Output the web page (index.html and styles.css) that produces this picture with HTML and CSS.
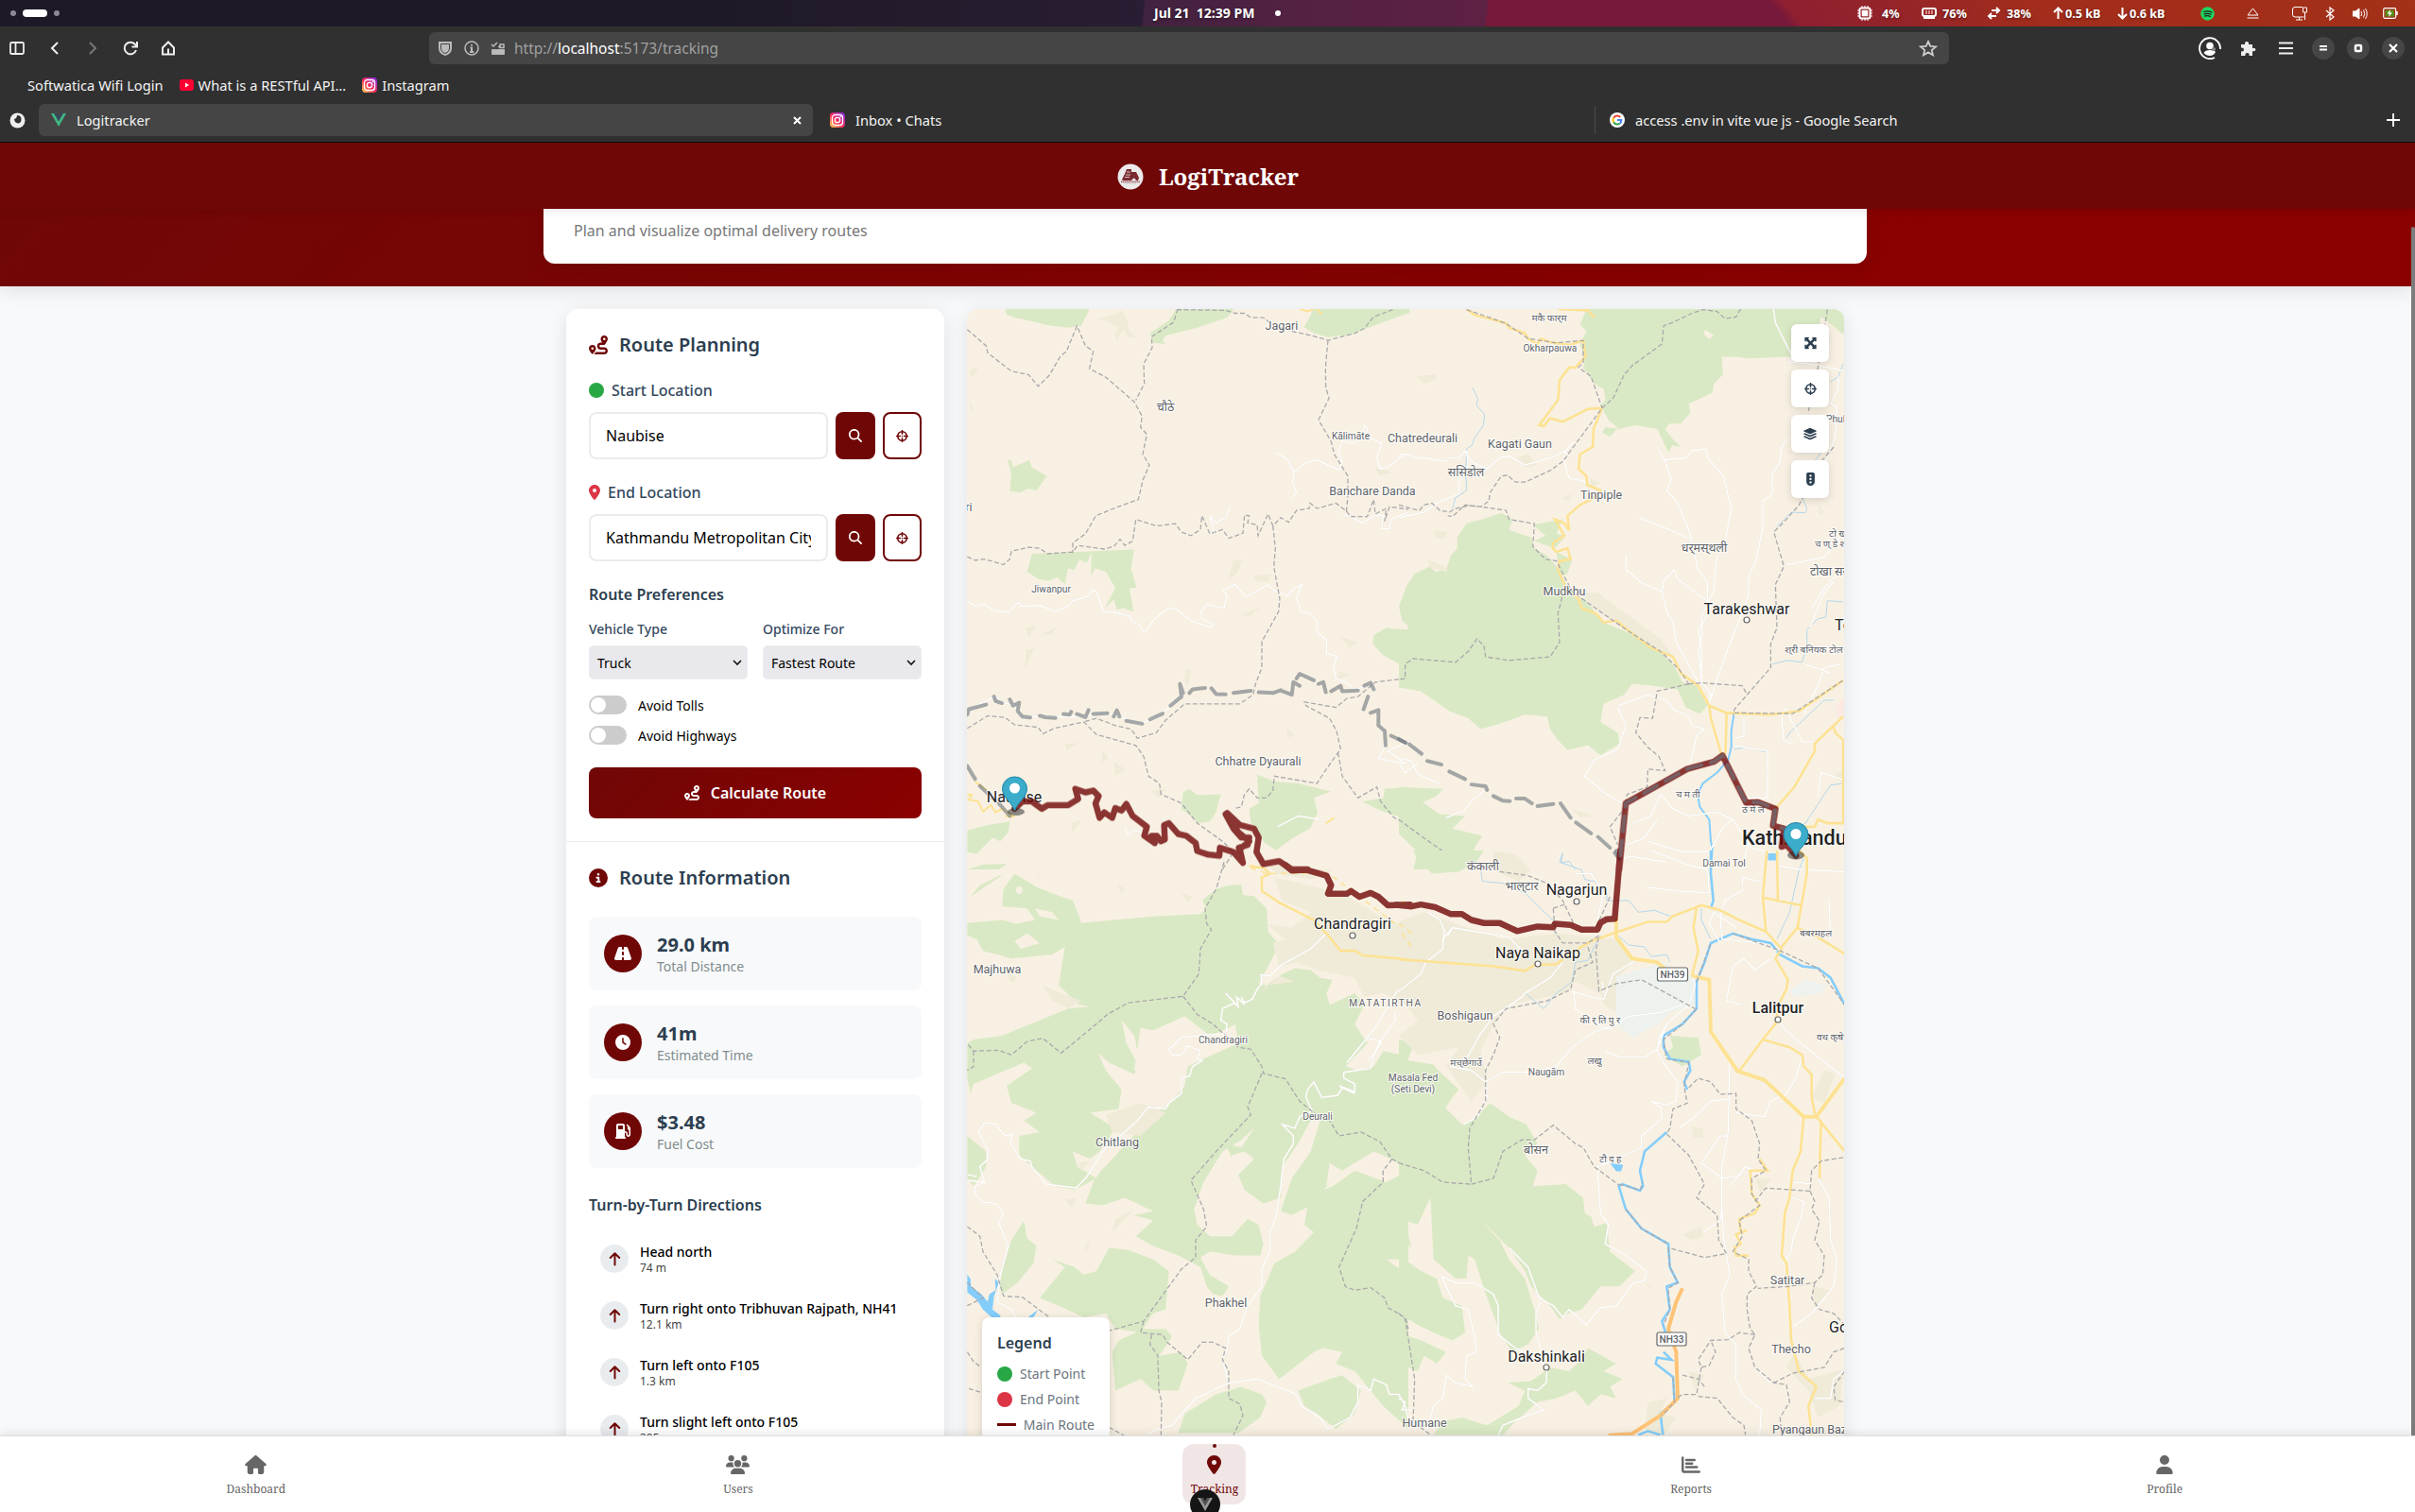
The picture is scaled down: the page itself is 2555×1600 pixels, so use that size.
FILE: index.html
```html
<!DOCTYPE html>
<html lang="en">
<head>
<meta charset="utf-8">
<title>Logitracker</title>
<link rel="stylesheet" href="styles.css">
</head>
<body>
<svg class="defs" width="0" height="0">
  <defs>
    <symbol id="route" viewBox="0 0 512 512"><path d="M512 96c0 50.2-59.1 125.1-84.6 155c-3.8 4.4-9.4 6.1-14.5 5H320c-17.7 0-32 14.3-32 32s14.3 32 32 32h96c53 0 96 43 96 96s-43 96-96 96H139.6c8.7-9.9 19.3-22.6 30-36.8c6.3-8.4 12.8-17.6 19-27.2H416c17.7 0 32-14.3 32-32s-14.3-32-32-32H320c-53 0-96-43-96-96s43-96 96-96h39.8c-21-31.5-39.8-67.7-39.8-96c0-53 43-96 96-96s96 43 96 96zM117.1 489.1c-3.8 4.3-7.2 8.1-10.1 11.3l-1.8 2-.2-.2c-6 4.6-14.6 4-20-1.8C59.8 473 0 402.5 0 352c0-53 43-96 96-96s96 43 96 96c0 30-21.1 67-43.5 97.9c-10.7 14.7-21.7 28-30.8 38.5l-.6 .7zM128 352a32 32 0 1 0 -64 0 32 32 0 1 0 64 0zM416 128a32 32 0 1 0 0-64 32 32 0 1 0 0 64z"/></symbol>
    <symbol id="pin" viewBox="0 0 384 512"><path d="M215.7 499.2C267 435 384 279.4 384 192C384 86 298 0 192 0S0 86 0 192c0 87.4 117 243 168.3 307.2c12.3 15.3 35.1 15.3 47.4 0zM192 128a64 64 0 1 1 0 128 64 64 0 1 1 0-128z"/></symbol>
    <symbol id="search" viewBox="0 0 512 512"><path d="M416 208c0 45.9-14.9 88.3-40 122.7L502.6 457.4c12.5 12.5 12.5 32.8 0 45.3s-32.8 12.5-45.3 0L330.7 376c-34.4 25.2-76.8 40-122.7 40C93.1 416 0 322.9 0 208S93.1 0 208 0S416 93.1 416 208zM208 352a144 144 0 1 0 0-288 144 144 0 1 0 0 288z"/></symbol>
    <symbol id="cross" viewBox="0 0 512 512"><g fill="none" stroke="currentColor" stroke-width="62" stroke-linecap="round"><circle cx="256" cy="256" r="186"/><path d="M256 30V170M256 342V482M30 256H170M342 256H482"/></g><circle cx="256" cy="256" r="32"/></symbol>
    <symbol id="info" viewBox="0 0 512 512"><path d="M256 512A256 256 0 1 0 256 0a256 256 0 1 0 0 512zM216 336h24V272H216c-13.3 0-24-10.7-24-24s10.7-24 24-24h48c13.3 0 24 10.7 24 24v88h8c13.3 0 24 10.7 24 24s-10.7 24-24 24H216c-13.3 0-24-10.7-24-24s10.7-24 24-24zm40-208a32 32 0 1 1 0 64 32 32 0 1 1 0-64z"/></symbol>
    <symbol id="road" viewBox="0 0 576 512"><path d="M256 32H181.2c-27.1 0-51.3 17.1-60.3 42.6L3.1 407.2C1.1 413 0 419.2 0 425.4C0 455.5 24.5 480 54.6 480H256V416c0-17.7 14.3-32 32-32s32 14.3 32 32v64H521.4c30.2 0 54.6-24.5 54.6-54.6c0-6.2-1.1-12.4-3.1-18.2L455.1 74.6C446 49.1 421.9 32 394.8 32H320V96c0 17.7-14.3 32-32 32s-32-14.3-32-32V32zm64 192v64c0 17.7-14.3 32-32 32s-32-14.3-32-32V224c0-17.7 14.3-32 32-32s32 14.3 32 32z"/></symbol>
    <symbol id="clock" viewBox="0 0 512 512"><path d="M256 0a256 256 0 1 1 0 512A256 256 0 1 1 256 0zM232 120V256c0 8 4 15.5 10.7 20l96 64c11 7.4 25.9 4.4 33.3-6.7s4.4-25.9-6.7-33.3L280 243.2V120c0-13.3-10.7-24-24-24s-24 10.7-24 24z"/></symbol>
    <symbol id="fuel" viewBox="0 0 512 512"><path d="M32 64C32 28.7 60.7 0 96 0H256c35.3 0 64 28.7 64 64V256h8c48.6 0 88 39.4 88 88v32c0 13.3 10.7 24 24 24s24-10.7 24-24V222c-27.6-7.1-48-32.2-48-62V96L384 64c-8.8-8.8-8.8-23.2 0-32s23.2-8.8 32 0l77.3 77.3c12 12 18.7 28.3 18.7 45.3V168v24 32V376c0 39.8-32.2 72-72 72s-72-32.2-72-72V344c0-22.1-17.9-40-40-40h-8V448c17.7 0 32 14.3 32 32s-14.3 32-32 32H32c-17.7 0-32-14.3-32-32s14.3-32 32-32V64zM96 80v96c0 8.8 7.2 16 16 16H240c8.8 0 16-7.2 16-16V80c0-8.8-7.2-16-16-16H112c-8.8 0-16 7.2-16 16z"/></symbol>
    <symbol id="arrow" viewBox="0 0 384 512"><path d="M192 460V70M40 222L192 70L344 222" fill="none" stroke="currentColor" stroke-width="64" stroke-linecap="round" stroke-linejoin="round"/></symbol>
    <symbol id="home" viewBox="0 0 576 512"><path d="M575.8 255.5c0 18-15 32.100-32 32.100h-32l.7 160.200c0 35.200-20 64.200-56 64.200H392c-22 0-40-18-40-40V376c0-13-11-24-24-24h-80c-13 0-24 11-24 24v96c0 22-18 40-40 40H120c-31 0-56-25-56-56V287.600H32c-18 0-32-14-32-32.100c0-9 3-17 10-24L266.400 8c7-7 15-8 22-8s15 2 21 7L564.800 231.500c8 7 12 15 11 24z"/></symbol>
    <symbol id="users" viewBox="0 0 640 512"><circle cx="144" cy="80" r="80"/><circle cx="496" cy="80" r="80"/><path d="M0 299c0-62 45-107 106-107h44c16 0 31 4 45 10c-8 50 8 86 40 118H21c-12 0-21-9-21-21zM405 320c34-32 50-70 42-118c14-7 28-10 44-10h43c59 0 106 48 106 107c0 12-9 21-21 21z"/><circle cx="320" cy="224" r="94"/><path d="M128 485c0-73 60-133 133-133h118c73 0 133 60 133 133c0 15-12 27-27 27H155c-15 0-27-12-27-27z"/></symbol>
    <symbol id="chart" viewBox="0 0 512 512"><path d="M32 64V400q0 48 48 48H480M128 128H352M128 224H288M128 320H416" fill="none" stroke="currentColor" stroke-width="62" stroke-linecap="round"/></symbol>
    <symbol id="user" viewBox="0 0 448 512"><path d="M224 256A128 128 0 1 0 224 0a128 128 0 1 0 0 256zm-45.700 48C79.800 304 0 383.800 0 482.300C0 498.700 13.300 512 29.700 512H418.300c16.400 0 29.700-13.300 29.700-29.700C448 383.800 368.200 304 269.700 304H178.300z"/></symbol>
    <symbol id="expand" viewBox="0 0 448 512"><path d="M0 32H150L168 60L132 98L224 190L316 98L280 60L298 32H448V182L420 200L382 164L290 256L382 348L420 312L448 330V480H298L280 452L316 414L224 322L132 414L168 452L150 480H0V330L28 312L66 348L158 256L66 164L28 200L0 182z"/></symbol>
    <symbol id="layers" viewBox="0 0 576 512"><path d="M264 5q24-10 48 0L560 118q28 14 0 32L312 264q-24 10-48 0L16 150q-28-18 0-32zM60 220L250 308q38 16 76 0L516 220l44 22q28 16 0 32L312 388q-24 10-48 0L16 274q-28-16 0-32zM60 346L250 434q38 16 76 0L516 346l44 20q28 16 0 32L312 508q-24 10-48 0L16 398q-28-16 0-32z"/></symbol>
    <symbol id="light" viewBox="0 0 320 512"><path fill-rule="evenodd" d="M64 0H256Q320 0 320 64V352A160 160 0 0 1 0 352V64Q0 0 64 0zM160 80a44 44 0 1 0 .1 0zM160 208a44 44 0 1 0 .1 0zM160 336a44 44 0 1 0 .1 0z"/></symbol>
    <symbol id="insta" viewBox="0 0 16 16"><rect width="16" height="16" rx="4" fill="url(#ig)"/><g fill="none" stroke="#fff" stroke-width="1.300"><rect x="2.500" y="2.500" width="11" height="11" rx="3"/><circle cx="8" cy="8" r="2.700"/></g><circle cx="11.200" cy="4.800" r=".8" fill="#fff"/></symbol>
    <symbol id="marker" viewBox="0 0 28 38"><path d="M14 37C11 28 1 23 1 13.500A13 12.500 0 0 1 27 13.500C27 23 17 28 14 37z" fill="#3bacca" stroke="#2182a3" stroke-width="1"/><ellipse cx="14" cy="13" rx="5.500" ry="5.500" fill="#fff"/></symbol>
    <linearGradient id="ig" x1="0" y1="1" x2="1" y2="0"><stop offset="0" stop-color="#fd5"/><stop offset=".45" stop-color="#ff2a5b"/><stop offset="1" stop-color="#7a2cf5"/></linearGradient>
  </defs>
</svg>

<header class="topbar">
  <div class="spaces"><i></i><b></b><i></i></div>
  <div class="date">Jul 21&nbsp; 12:39 PM<i></i></div>
  <div class="status">
    <svg width="16" height="16" viewBox="0 0 16 16"><g fill="none" stroke="#fff" stroke-width="1.500"><path d="M5 0V16M8 0V16M11 0V16M0 5H16M0 8H16M0 11H16" stroke-width="1"/><rect x="2.500" y="2.500" width="11" height="11" rx="2" fill="#972327" stroke-width="2"/><rect x="5.500" y="5.500" width="5" height="5" fill="#fff"/></g></svg>
    <span>4%</span>
    <svg width="16" height="13" viewBox="0 0 16 13"><rect x="1" y="1" width="14" height="8" rx="2" fill="none" stroke="#fff" stroke-width="2"/><path d="M5 3V7M8 3V7M11 3V7" stroke="#eaa" stroke-width="1.500"/><path d="M2 9H14V12H2z" fill="#fff"/></svg>
    <span>76%</span>
    <svg width="15" height="14" viewBox="0 0 15 14" fill="none" stroke="#fff" stroke-width="2"><path d="M5 4H13M10 1L13 4L10 7M10 10H2M5 7L2 10L5 13"/></svg>
    <span>38%</span>
    <svg width="11" height="14" viewBox="0 0 11 14" fill="none" stroke="#fff" stroke-width="2"><path d="M5.500 13V1M1 6L5.500 1.500L10 6"/></svg>
    <span>0.5 kB</span>
    <svg width="11" height="14" viewBox="0 0 11 14" fill="none" stroke="#fff" stroke-width="2"><path d="M5.500 1V13M1 8L5.500 12.500L10 8"/></svg>
    <span>0.6 kB</span>
    <svg width="15" height="15" viewBox="0 0 15 15"><circle cx="7.500" cy="7.500" r="7.200" fill="#1ed760"/><path d="M3 5.500Q8 4 12.500 6.200M3.500 8Q8 6.500 11.500 8.500M4 10.200Q8 9 10.800 10.700" fill="none" stroke="#222" stroke-width="1.300"/></svg>
    <svg width="13" height="12" viewBox="0 0 13 12" fill="none" stroke="#fff"><path d="M1 8L6.500 1L12 8zM.5 11H12.500"/></svg>
    <svg width="16" height="15" viewBox="0 0 16 15" fill="none" stroke="#fff"><path d="M11 .5H3Q.5 .5 .5 3V8.500Q.5 11 3 11H12.500M4 14H11M7.500 11V14M11.500 1H15.500V6H11.500zM13.500 6V14"/></svg>
    <svg width="10" height="15" viewBox="0 0 10 15" fill="none" stroke="#fff" stroke-width="1.200"><path d="M1 4L9 11L5 14V1L9 4L1 11"/></svg>
    <svg width="16" height="13" viewBox="0 0 16 13" fill="none" stroke="#fff"><path d="M0 4H3L7 1V12L3 9H0z" fill="#fff"/><path d="M9 4Q10.500 6.500 9 9M11.500 2.500Q14 6.500 11.500 10.500M13.500 1Q17 6.500 13.500 12"/></svg>
    <svg width="17" height="12" viewBox="0 0 17 12"><rect x=".7" y=".7" width="13" height="10.600" rx="1.500" fill="none" stroke="#fff" stroke-width="1.200"/><rect x="2.500" y="2.500" width="9.500" height="7" fill="#5a8c1a"/><path d="M8 2L4.500 6.500H7L6 10L10 5.500H7.500z" fill="#fff"/><path d="M15 4V8" stroke="#fff" stroke-width="1.600"/></svg>
  </div>
</header>

<section class="browser">
  <div class="toolbar">
    <div class="navbtns">
      <svg width="16" height="16" viewBox="0 0 16 16" fill="none" stroke="#eee" stroke-width="1.800"><rect x="1" y="2" width="14" height="12" rx="1.500"/><path d="M6.500 2V14"/></svg>
      <svg width="16" height="16" viewBox="0 0 16 16" fill="none" stroke="#eee" stroke-width="2"><path d="M11 2L5 8L11 14"/></svg>
      <svg width="16" height="16" viewBox="0 0 16 16" fill="none" stroke="#777" stroke-width="2"><path d="M5 2L11 8L5 14"/></svg>
      <svg width="16" height="16" viewBox="0 0 16 16" fill="none" stroke="#eee" stroke-width="2"><path d="M14 10A6.300 6.300 0 1 1 12.500 3.500L14.500 5.500M15 1V6.500H9.500"/></svg>
      <svg width="16" height="16" viewBox="0 0 16 16" fill="none" stroke="#eee" stroke-width="2"><path d="M2 7.500L8 1.500L14 7.500V14.500H2zM8 14V8.500" /></svg>
    </div>
    <div class="url">
      <svg width="16" height="16" viewBox="0 0 16 16"><path d="M1 1H15V8Q15 14 8 16Q1 14 1 8z" fill="#bbb"/><path d="M3.500 3.500H12.500V8Q12.500 12 8 13.500Q3.500 12 3.500 8z" stroke="#444" fill="#bbb"/></svg>
      <svg width="16" height="16" viewBox="0 0 16 16" fill="none" stroke="#bbb" stroke-width="1.500"><circle cx="8" cy="8" r="7"/><path d="M6.500 7.500H8V12M6 12H10.200M8 4V5.500" stroke-width="2"/></svg>
      <svg width="16" height="14" viewBox="0 0 16 14" fill="none" stroke="#bbb" stroke-width="1.500"><path d="M1 3L3 5L7 1M8 5.500H11M10 3H14V6.500H10zM2 9H14V13H2z"/><path d="M2 9H14V13H2z" fill="#bbb"/></svg>
      <span class="addr">http://<b>localhost</b>:5173/tracking</span>
      <svg class="star" width="20" height="18" viewBox="0 0 20 18" fill="none" stroke="#ccc" stroke-width="1.800"><path d="M10 2L12.300 7L18 7.400L13.700 11L15 16.300L10 13.400L5 16.300L6.300 11L2 7.400L7.700 7z"/></svg>
    </div>
    <div class="winbtns">
      <svg width="24" height="24" viewBox="0 0 24 24"><path d="M23 13A11 11 0 1 0 17 22" fill="none" stroke="#fff" stroke-width="1.800"/><circle cx="12" cy="9.500" r="3.800" fill="#fff"/><path d="M5.500 17Q7 14 12 14Q17 14 18 16Q16 20 12 20Q8 20 5.500 17z" fill="#fff"/><circle cx="16" cy="13" r="2" fill="#888"/></svg>
      <svg width="17" height="17" viewBox="0 0 17 17"><path d="M5 4Q4.500 1 7 1Q9.500 1 9 4H13V8Q16 7 16.500 9.500Q16 12 13 11V16H9.500Q10 13 7.500 13Q5 13 5.500 16H1V11.500Q4 12 4 9.500Q4 7 1 7.500V4z" fill="#eee"/></svg>
      <svg width="15" height="14" viewBox="0 0 15 14"><path d="M0 1.500H15M0 7H15M0 12.500H15" stroke="#eee" stroke-width="2"/></svg>
      <i class="win"><svg width="8" height="6"><path d="M0 1H8M0 4.500H8" stroke="#fff" stroke-width="1.800"/></svg></i>
      <i class="win"><svg width="10" height="10"><rect x="2" y="2" width="6" height="6" rx="1" fill="none" stroke="#fff" stroke-width="2.500"/></svg></i>
      <i class="win"><svg width="10" height="10"><path d="M1 1L9 9M9 1L1 9" stroke="#fff" stroke-width="2.200"/></svg></i>
    </div>
  </div>
  <div class="bookmarks">
    <span class="bm">Softwatica Wifi Login</span>
    <span class="bm"><svg width="15" height="12" viewBox="0 0 15 12"><rect width="15" height="12" rx="3" fill="#f03"/><path d="M6 3.500L10 6L6 8.500z" fill="#fff"/></svg>What is a RESTful API…</span>
    <span class="bm"><svg width="16" height="16"><use href="#insta"/></svg>Instagram</span>
  </div>
  <div class="tabs">
    <svg class="ff" width="17" height="17" viewBox="0 0 17 17"><circle cx="8.500" cy="8.500" r="8" fill="#eee"/><path d="M8 3Q13 3 12.500 8Q12 11.500 9 11.500Q5.500 11 5 7Q8 6 8 3z" fill="#303030"/></svg>
    <div class="tab active"><svg width="16" height="14" viewBox="0 0 16 14"><path d="M0 0H3.200L8 8.300L12.800 0H16L8 14z" fill="#41b883"/><path d="M3.200 0H6L8 3.500L10 0H12.800L8 8.300z" fill="#35495e"/></svg><span>Logitracker</span><svg class="close" width="9" height="9"><path d="M1 1L8 8M8 1L1 8" stroke="#fff" stroke-width="2"/></svg></div>
    <div class="tab"><svg width="16" height="16"><use href="#insta"/></svg><span>Inbox • Chats</span></div>
    <div class="tab ruled"><svg width="16" height="16" viewBox="0 0 16 16"><circle cx="8" cy="8" r="8" fill="#fff"/><g fill="none" stroke-width="2"><path d="M11.200 5A4.500 4.500 0 0 0 4.200 5.600" stroke="#ea4335"/><path d="M4.200 5.600A4.500 4.500 0 0 0 4.200 10.400" stroke="#fbbc05"/><path d="M4.200 10.400A4.500 4.500 0 0 0 10.800 11.500" stroke="#34a853"/><path d="M8 8H12.300Q12.300 10.400 10.800 11.500" stroke="#4285f4"/></g></svg><span>access .env in vite vue js - Google Search</span></div>
    <svg class="plus" width="16" height="16"><path d="M8 1V15M1 8H15" stroke="#fff" stroke-width="1.800"/></svg>
  </div>
</section>

<div class="app">
  <div class="brand">
    <svg width="28" height="28" viewBox="0 0 28 28"><circle cx="14" cy="14" r="13.500" fill="#eceaea"/><path d="M5 17L8 11L10 6H15V9L20 9L23 15L22 18H20Q18 13 15 18H6z" fill="#7a2a30"/><path d="M10 9H14M9 12H14M8 14.500H13" stroke="#eceaea" stroke-width=".8"/><path d="M4 19.300H24" stroke="#a5686c" stroke-width="1.800" stroke-dasharray="1.400 .5"/><path d="M8 21.500H20" stroke="#ccc" stroke-width=".7"/></svg>
    <h1>LogiTracker</h1>
  </div>
  <div class="hero"><div class="hero-card">Plan and visualize optimal delivery routes</div></div>
  <main class="layout">
    <aside class="panel">
      <section class="planning">
        <h2><svg width="20" height="20"><use href="#route"/></svg>Route Planning</h2>
        <label class="loc"><i class="dot green"></i>Start Location</label>
        <div class="inputrow">
          <div class="input"><span>Naubise</span></div>
          <button class="btn solid"><svg width="14" height="14"><use href="#search"/></svg></button>
          <button class="btn outline"><svg width="13" height="13"><use href="#cross"/></svg></button>
        </div>
        <label class="loc"><svg class="red" width="12" height="16"><use href="#pin"/></svg>End Location</label>
        <div class="inputrow">
          <div class="input"><span>Kathmandu Metropolitan City</span></div>
          <button class="btn solid"><svg width="14" height="14"><use href="#search"/></svg></button>
          <button class="btn outline"><svg width="13" height="13"><use href="#cross"/></svg></button>
        </div>
        <h3>Route Preferences</h3>
        <div class="prefs">
          <div><label>Vehicle Type</label><div class="select">Truck<svg width="10" height="7"><path d="M1 1L5 5L9 1" fill="none" stroke="#111" stroke-width="1.600"/></svg></div></div>
          <div><label>Optimize For</label><div class="select">Fastest Route<svg width="10" height="7"><path d="M1 1L5 5L9 1" fill="none" stroke="#111" stroke-width="1.600"/></svg></div></div>
        </div>
        <div class="toggle"><i></i>Avoid Tolls</div>
        <div class="toggle"><i></i>Avoid Highways</div>
        <button class="calc"><svg width="16" height="16"><use href="#route"/></svg>Calculate Route</button>
      </section>
      <section class="information">
        <h2><svg width="20" height="20"><use href="#info"/></svg>Route Information</h2>
        <div class="stat"><i><svg width="18" height="16"><use href="#road"/></svg></i><div><b>29.0 km</b><span>Total Distance</span></div></div>
        <div class="stat"><i><svg width="16" height="16"><use href="#clock"/></svg></i><div><b>41m</b><span>Estimated Time</span></div></div>
        <div class="stat"><i><svg width="16" height="16"><use href="#fuel"/></svg></i><div><b>$3.48</b><span>Fuel Cost</span></div></div>
        <h3>Turn-by-Turn Directions</h3>
        <div class="step"><i><svg width="13" height="16"><use href="#arrow"/></svg></i><div><b>Head north</b><span>74 m</span></div></div>
        <div class="step"><i><svg width="13" height="16"><use href="#arrow"/></svg></i><div><b>Turn right onto Tribhuvan Rajpath, NH41</b><span>12.1 km</span></div></div>
        <div class="step"><i><svg width="13" height="16"><use href="#arrow"/></svg></i><div><b>Turn left onto F105</b><span>1.3 km</span></div></div>
        <div class="step"><i><svg width="13" height="16"><use href="#arrow"/></svg></i><div><b>Turn slight left onto F105</b><span>305 m</span></div></div>
      </section>
    </aside>

    <div class="map">
      <svg class="canvas" width="928" height="1240" viewBox="0 0 928 1240">
        <!-- north-west sheet -->
        <g transform="translate(-3 -7) scale(.33333 .38270)">
          <g class="forest">
            <path d="M130 15H400L372 64L330 70L270 64L205 50L160 42L135 34zM650 50L675 15H860L835 42L740 70L640 92L630 105L640 115L600 112L590 85zM1110 15H1415V28L1330 55L1290 68L1230 88L1155 97L1110 85L1078 68L1100 35zM137 433L150 438L155 455L185 445L207 435L214 455L262 480L230 520L205 515L180 525L145 522L150 470zM215 695L540 683L530 735L548 790L525 790L538 855L505 845L485 850L475 822L445 848L480 790L450 745L415 735L403 757L404 690L390 720L365 712L350 740L330 735L320 780L295 760L270 770L235 765L200 745zM1410 775L1380 840L1390 880L1410 895zM1410 905L1340 900L1300 920L1297 945L1330 975L1390 1005L1385 1060L1410 1062zM930 1305L985 1325L1060 1330L1165 1352L1110 1370L1122 1410L1098 1455L1045 1480L990 1515L955 1495L910 1440L905 1400L935 1385zM1410 1340L1335 1345L1330 1370L1265 1380L1320 1405L1410 1430zM695 1355L715 1345L740 1362L815 1360L800 1410L780 1435L745 1440L690 1400zM10 1460L75 1445L145 1435L140 1465L115 1490L90 1480L40 1525L10 1520zM10 1568L60 1555L138 1552L110 1568z"/>
          </g>
          <g class="patch"><path d="M500 22L515 40L525 80L550 100L520 95L505 75L485 105L475 90L490 70L450 50L420 45L470 35zM20 185L45 178L35 200L17 205zM15 270L35 305L22 300zM855 710L885 715L865 750L840 765zM920 755L975 752L965 775L920 768zM940 840L880 865L910 868zM195 900L230 895L205 925zM300 895L275 920L245 918zM195 960L225 958L205 990L193 1015zM705 1012L722 1020L710 1062L698 1045zM1195 925L1250 940L1225 955zM1025 1180L1050 1195L1025 1205zM320 1220L360 1218L325 1240zM440 1240L460 1260L435 1275zM475 1270L510 1290L480 1310zM590 1350L640 1345L620 1370zM340 1440L375 1430L345 1465zM1300 455L1360 470L1320 480zM1190 1020L1230 1030L1180 1045z"/></g>
          <g class="road">
            <path d="M993 415L1028 437L1047 470L1043 500L1055 525L1040 540M1047 470L1080 445L1120 435L1150 448L1190 463L1200 440L1187 410L1200 385L1240 390L1265 370L1270 340L1280 350L1275 370L1325 390L1310 430L1320 460L1345 455L1370 440L1385 420L1410 420M845 565L830 595L800 610L780 590L795 640M10 825L35 840L65 835L95 852L145 857L155 840L175 830L180 840L240 838L290 855L330 840L345 825L395 812L405 795L420 800L443 855L485 858L525 868L535 885L555 890L570 912L580 908L600 880L640 850L670 845L720 880L785 900L790 890L755 875L752 855L770 835L825 845L835 810L822 795L860 780L895 815L925 800L965 780L980 795L1025 812L1040 795L1072 780L1055 815L1070 855L1100 860L1122 885L1120 910L1150 935L1150 970L1185 980L1172 1005L1180 1040L1210 1050L1240 1070L1290 1060L1305 1075M1200 585L1225 592L1265 610L1300 590L1330 590L1325 625L1350 625L1355 600L1410 580M10 1130L50 1110L100 1090L120 1105L160 1115L180 1145L310 1145L385 1145L420 1135L480 1140L560 1165L620 1140L690 1090L690 1060M1345 1215L1315 1260L1350 1268L1400 1275L1345 1240L1410 1215M510 1455L520 1472L540 1460L570 1465M995 1450L1060 1420L1130 1430"/>
          </g>
          <g class="yellow thin"><path d="M1065 18L1090 25L1115 15L1135 32M10 1360L25 1362L15 1375L45 1380L60 1408L85 1390L100 1410L120 1400L160 1422L130 1420M1148 1440L1175 1425M35 1325L75 1350"/></g>
          <g class="border">
            <path d="M10 75L70 120L75 140L150 190L205 200L235 232L270 202L305 150L325 135L358 65L385 120L410 135L398 183L450 207L540 275L565 315L560 345L580 365L567 420L588 450L568 490L553 545L480 568L418 590L385 640L345 665L345 693M678 18L665 55L595 95L597 125L570 170L572 225L545 270M675 20L830 22L860 30L890 30L910 42L950 42L985 65L1040 80L1105 92L1155 105L1240 85L1270 72L1300 40L1360 20M1155 105L1147 180L1148 235L1158 265L1125 325L1165 385L1175 420L1218 480L1218 535L1213 580M10 703L35 713L65 710L125 725L145 710L150 688L205 677L240 680L265 695L345 690L360 672L445 682L475 675L495 655L510 672L535 660L545 600L610 618L670 612L690 635L720 645L750 628L755 590L780 640L820 628L840 652L885 638L890 588L905 590L900 610L930 615L933 645L965 585L980 618L1005 595L1030 608L1055 575L1095 570L1098 555L1120 570L1180 555L1215 578L1225 592L1280 592L1300 545L1305 585L1340 570L1335 605L1350 565L1410 572M980 618L988 680L983 730L1002 820L998 855L945 938L945 1010L925 1055L917 1085L875 1110L700 1110L640 1155L610 1190L550 1205L530 1180L480 1170L420 1150L378 1160M10 1178L75 1143L130 1148L160 1168L235 1175L250 1193L285 1178L380 1160L420 1195L545 1225L570 1255L585 1310L620 1330L625 1360L690 1385L740 1440L820 1490L855 1520L820 1568M1410 1000L1400 1040L1305 1050L1250 1090L1215 1095L1180 1120L1080 1105L1085 1115L1160 1150L1182 1185L1195 1235L1150 1290L1120 1330L985 1310L980 1350L960 1370L930 1370L905 1345L890 1360L880 1395L855 1400M1187 1245L1200 1310L1250 1370L1310 1340L1322 1380L1365 1425L1410 1445"/>
          </g>
          <path class="alt" d="M10 1140L15 1125L70 1112M95 1090L100 1102L120 1108M145 1098L155 1115L175 1107L170 1130L185 1145L210 1148M240 1143L258 1147L290 1149M315 1138L335 1140L340 1132M358 1138L385 1147L395 1127M410 1138L455 1136M475 1145L485 1128L493 1145M515 1157L565 1165M590 1153L630 1137M655 1115L690 1090L685 1055L695 1080M715 1080L725 1070L765 1066M785 1067L800 1083L830 1084M855 1080L910 1074M935 1078L980 1080L1005 1072M1010 1075L1040 1085L1045 1050L1065 1060M1055 1040L1065 1027L1110 1045M1125 1055L1140 1050L1148 1078M1165 1075L1195 1060L1200 1075L1250 1073M1270 1060L1290 1052L1300 1070M1282 1090L1268 1125M1290 1135L1315 1127L1315 1170L1335 1185L1338 1225M1355 1198L1400 1217M10 1282L35 1318M50 1337L100 1378M110 1385L145 1420"/>
        </g>

        <!-- north-east sheet -->
        <g transform="translate(457 -7) scale(.33333 .38270)">
          <g class="forest">
            <path d="M597 15H1415V90L1395 80L1360 110L1310 120L1240 150L1110 155L1070 150L1025 150L1028 200L1000 225L995 250L920 280L925 305L895 335L860 335L845 350L870 378L895 400L868 395L855 415L820 350L750 340L690 352L670 372L645 360L655 345L700 350L665 325L640 285L655 270L650 240L620 225L585 180L590 165L575 115L595 80L575 60zM0 905L30 905L15 840L20 790L50 750L100 730L115 745L150 740L165 700L185 680L185 650L215 610L265 600L325 582L360 600L350 630L420 650L430 680L470 700L500 730L555 815L590 820L650 885L790 935L870 1000L900 1050L945 1060L980 1115L955 1138L910 1120L885 1070L790 1058L740 1055L715 1085L650 1110L640 1160L695 1190L700 1220L640 1252L600 1225L535 1238L500 1205L480 1180L470 1145L400 1140L320 1165L260 1180L220 1150L160 1130L70 1075L0 1065zM425 615L520 600L500 640L530 645L495 680L430 660L465 645zM500 690L550 712L535 750L510 760zM0 1340L140 1345L120 1365L75 1382L130 1415L210 1420L170 1455L265 1475L245 1500L230 1530L140 1545L105 1568H45L60 1520L0 1470z"/>
          </g>
          <g class="land"><path d="M1340 40L1385 70L1410 90V110L1350 98L1335 60zM970 75L1000 90L985 102L970 90z"/></g>
          <g class="patch"><path d="M55 205L120 198L115 215L80 225zM575 802L630 802L830 930L870 975L850 975L700 895L640 860zM110 630L155 635L140 655L115 650zM90 710L145 730L155 745L100 735zM375 430L410 420L440 450L400 455zM605 485L640 500L610 510zM1385 1300L1410 1300V1325L1385 1320zM1330 555L1350 580L1335 590zM550 1400L620 1420L575 1425zM520 540L550 530L540 550z"/></g>
          <path d="M1415 1090L1385 1120L1395 1150L1415 1140z" fill="#fbe9e2"/>
          <g class="water thin"><path d="M233 235L250 265L247 285L272 310L268 340L240 375L232 395L215 405L212 470L215 520L180 540L170 570M1410 170L1395 205L1370 220M1340 415L1310 450M1280 540L1295 570L1290 582L1245 580L1200 620M1410 828L1360 825L1355 870L1330 875L1295 905L1295 945L1280 995L1235 990L1185 1000M1380 1100L1350 1100L1240 1190L1230 1205M1410 1330L1370 1335L1290 1440L1270 1450M1065 1235L1110 1230L1165 1243M520 1525L515 1550L540 1545L560 1568"/></g>
          <path class="water" d="M1063 1140L1055 1185L1055 1230L1045 1265L1010 1300L965 1330L948 1360L955 1395L985 1430L990 1490L995 1510L990 1568"/>
          <path d="M1172 1524H1198V1543H1172z" fill="#84cdfb"/>
          <g class="road">
            <path d="M1188 15L1195 55L1220 100L1250 150L1240 165L1300 170L1390 185L1410 190M1395 205L1395 240L1370 280L1390 290L1385 370L1355 440M1235 375L1215 400L1210 440L1185 475L1185 530L1155 550L1155 620L1135 710L1110 760L1110 810L1050 945L1010 1040L985 1110M825 410L845 440L865 490L850 520L885 555L925 640L930 665L950 740L978 770L980 830L975 870L950 905L960 950L960 1050M840 435L910 430L930 410L975 405L980 430L1030 480L1055 570L1035 660L1010 700L998 800L960 870L963 920L950 960L957 1010L960 1050M762 595L850 625L925 655M722 700L722 740L770 775L835 800L840 770L875 740L885 765L930 795L985 830M835 800L850 855L870 885L880 940L950 1050M0 430L25 420L60 432L80 430L150 440L160 430L190 430L210 410L230 440L280 460L320 430L350 425L400 450L480 430L530 410L555 385M530 410L525 440L540 485L590 495L600 510M215 410L220 450L190 500L190 530L130 550L80 580L0 595M695 1115L790 1085L850 1100L870 1125L920 1145L930 1170L970 1180L945 1195L935 1240L920 1290M695 1120L720 1170L695 1235L620 1265L590 1310L650 1355L720 1390M0 1260L40 1268L60 1305L130 1330M0 1275L20 1300L60 1275M150 1425L205 1405L235 1375L270 1350M1230 725L1350 705L1410 640M1310 845L1350 790L1410 735M1320 1215L1280 1215L1225 1120M1095 1150L1095 1200L1065 1205M1060 1225L1170 1240L1170 1370L1080 1370M740 1440L800 1420L830 1360L870 1400L920 1420L1010 1410L1060 1430M725 1500L780 1480L820 1430M790 1490L900 1520L985 1520L1030 1450L1060 1430L1120 1510L1180 1520M1090 1568L1110 1490L1200 1480M1330 1370L1340 1300L1410 1320M1215 1140L1220 1210L1245 1220M1400 1000L1350 1010L1330 1060L1285 1140M1290 1000L1370 1025M1305 900L1345 810L1380 770M960 1050L990 1080L985 1115"/>
          </g>
          <g class="yellow"><path d="M215 18L240 35L290 45L340 58L350 70L400 85L410 100L440 115L450 100L480 110L540 118L585 105L592 150L560 180L540 180L510 215L505 270L445 340L460 342L480 320L520 330L600 295L645 292L618 350L615 400L575 420L570 460L595 480L598 505L640 520L610 545L575 560L535 590L540 630L525 610L495 600L525 645L490 665L488 680L500 690L535 680L545 710L510 715L505 740L530 790L570 820L580 845L625 860L650 885L690 880L740 915L800 955L870 980L895 1025L950 1060L985 1115L1040 1135L1180 1140L1270 1130L1410 1045M985 1115L990 1150L1027 1260M1040 1135L1037 1240L1027 1260M505 18L600 22L620 42M1410 1145L1320 1220L1320 1240L1255 1340L1200 1395L1190 1400M1380 1175L1385 1190L1410 1210L1410 1440L1360 1440L1330 1430L1320 1450L1240 1450"/></g>
          <g class="border">
            <path d="M1085 18L1070 40L1035 45L1010 25L965 20L930 30L870 55L840 65L835 115L740 175L715 200L680 265L645 292L520 440L480 465L400 497L370 497L345 478L325 480L290 525L285 550L260 565L210 560L170 592L155 590M215 20L340 58L410 100L500 112L585 105L585 165L570 180L610 205L645 292M1360 20L1330 180L1300 300M1380 400L1340 440L1270 560L1230 600L1190 635L1222 730L1195 780L1200 900L1180 945L1180 1010L1105 1085L1065 1125L1060 1140M0 560L40 570L65 575L80 560L105 555L130 575L160 580L180 570L220 562L260 565L340 575L350 600L430 612L425 675L465 710L500 715L550 800L680 880L730 910L830 965L890 1015L920 1055M518 815L505 860L510 940L480 980L350 990L275 980L270 950L248 930L220 965L180 995L45 985L20 1000L20 1040L0 1042M920 1055L820 1075L805 1150L765 1148L752 1190L790 1230L825 1255L845 1295L790 1290L788 1340L725 1360L715 1400L670 1450L695 1500M920 1055L960 1052L1090 1060L1105 1085M1065 1135L1250 1137L1410 1045M0 1430L70 1475L160 1530L240 1550L330 1568"/>
          </g>
          <path class="alt" d="M0 1207L22 1218M33 1222L72 1248M90 1268L135 1278M160 1297L210 1318M230 1333L275 1338L280 1348M300 1365L330 1378L352 1379M372 1372L400 1372L422 1385M440 1393L490 1387M513 1385L545 1425M562 1438L610 1468M632 1478L670 1508M685 1522L700 1540"/>
        </g>

        <!-- south-west sheet -->
        <g transform="translate(-3 573) scale(.33333 .40820)">
          <g class="forest">
            <path d="M10 188L120 180L165 190L225 180L200 150L120 145L125 100L160 60L230 95L310 120L345 130L370 180L370 188L610 170L750 165L770 150L755 130L800 100L840 90L880 88L885 115L920 118L960 150L965 210L1000 245L965 300L935 345L960 350L1010 320L1050 305L1100 310L1130 330L1170 335L1150 370L1160 400L1240 370L1270 400L1240 450L1280 500L1210 560L1250 570L1300 560L1330 520L1390 530L1410 590V830L1355 800L1300 780L1200 830L1140 880L1170 870L1240 830L1340 860L1410 830V1085L1380 1060L1340 1060L1410 1100V1500L1330 1440L1240 1350L1180 1330L1200 1300L1140 1290L1110 1300L1000 1370L945 1310L935 1230L940 1155L985 1070L1050 1040L1110 990L1080 970L1090 925L1040 945L1005 935L1040 850L1100 780L1130 700L1100 700L1060 760L1010 820L1005 900L950 915L890 880L830 760L880 770L920 720L880 750L820 780L760 860L730 930L740 970L780 1000L850 1000L900 955L935 970L950 1020L940 1050L860 1050L780 1040L750 1055L780 1100L840 1130L820 1155L790 1150L770 1130L750 1080L680 1050L600 1025L545 1000L600 960L540 945L600 935L510 900L440 920L385 915L410 860L430 835L560 720L600 680L650 660L700 610L710 560L760 540L870 500L860 450L840 460L780 480L700 430L590 470L550 520L540 480L500 440L515 500L555 560L540 580L460 550L425 525L450 570L500 620L490 670L400 680L480 720L430 780L400 800L345 780L360 820L420 850L350 880L290 870L230 830L175 790L175 740L240 730L190 700L230 680L150 655L135 610L215 565L190 550L30 605L20 630L10 590V500L30 490L120 480L330 410L400 405L365 400L300 350L320 250L280 270L150 280L60 260L40 230L10 220zM150 1010L190 960L200 1005L230 1025L220 1070L170 1120L120 1150L110 1120zM240 1160L320 1080L280 1060L350 1080L380 1100L420 1090L460 1030L520 1035L600 1060L650 1090L640 1190L600 1200L560 1250L480 1240L450 1200L380 1210L300 1180zM490 1270L570 1240L640 1240L660 1260L620 1310L690 1300L710 1330L680 1400L600 1400L560 1370L480 1400L470 1300zM10 130L50 90L125 60L110 70L20 120zM10 740L70 780L70 820L30 870L10 850zM680 1510L700 1460L800 1410L880 1390L945 1410L960 1430L940 1470L870 1510zM1060 1400L1160 1370L1200 1360L1260 1400L1240 1460L1180 1500L1120 1460L1080 1440z"/>
          </g>
          <g class="land"><path d="M30 330L120 345L180 360L245 405L180 410L150 455L110 440L70 380L25 370zM850 790L890 780L920 800L870 840L835 825zM560 460L620 470L590 510L610 580L540 570zM160 235L200 215L240 240L180 255zM225 150L280 160L300 180L240 170zM1160 810L1200 830L1150 870z"/><circle cx="175" cy="103" r="10"/></g>
          <g class="patch"><path d="M250 350L370 390L330 410L280 390zM130 310L170 330L150 345zM970 40L1170 50L1100 75L990 60zM985 70L1200 110L1320 170L1410 200V400L1330 370L1270 380L1240 330L1120 310L1060 290L1000 300L980 240L1020 230L960 190L1040 200L1100 160L1010 130zM940 370L1000 325L1050 340L960 350zM450 685L560 655L640 680L560 740L470 730zM225 65L250 75L240 75zM320 905L360 900L340 925zM380 1030L400 1010L390 1040zM480 955L540 930L470 990zM360 810L400 805L370 830zM880 1180L900 1175L890 1190zM485 85L510 100L500 110zM690 110L725 120L710 135z"/></g>
          <g class="water"><path class="solid-water" d="M10 1100L20 1110L22 1130L55 1150L75 1170L80 1150L100 1140L98 1110L110 1120L95 1155L90 1190L115 1205V1212H90L60 1190L40 1165L10 1145zM200 1212L235 1190L220 1210z"/></g>
          <g class="road"><path d="M1150 215L1100 255L1010 295L970 325L942 322L945 345L930 360L915 385L890 395L880 380L890 400L865 380L870 405L830 370L860 395L820 410L815 440L835 450L830 475L770 478L690 485L650 515L660 530L690 530L710 505L750 520L740 540L755 545L725 560L715 585L690 590L690 630L650 655L640 670L585 665L550 700L495 740L440 780L390 845L355 875L260 865L215 820L210 805L180 800L145 755L155 735L130 740L100 710L65 705L45 730L75 775L75 800L50 820L65 860L10 855M65 860L35 870L35 890L60 912L100 915L125 940L110 965L140 1025L115 1100L105 1170L150 1190L165 1212M10 840L40 845M1410 335L1370 370L1320 440L1285 480L1215 550M1365 420L1370 440L1320 495L1300 530L1280 540M1285 487L1325 495M1325 495L1300 530L1290 565L1205 575L1205 590L1240 605L1240 625L1190 610L1240 630L1200 615L1185 635L1135 640L1110 600L1090 620L1085 640L1105 675L1065 690L1050 720L1010 710L1045 740L1045 760L1015 800L1005 870L990 950L970 990L970 1040L945 1085L945 1130L900 1180L875 1240L840 1260L835 1290L820 1320L840 1380L930 1370L1055 1410L1070 1440L1130 1470L1155 1500L1225 1470L1250 1430L1250 1385L1290 1400L1300 1370L1340 1385L1350 1410L1380 1410L1400 1440L1410 1475M840 1380L735 1420L680 1470L660 1490L615 1500L580 1512"/></g>
          <g class="yellow"><path d="M905 40L950 45L970 60L945 70L945 105L1000 135L1110 180L1150 215L1195 260L1240 260L1265 272L1410 282"/></g>
          <g class="yellow dashed"><path d="M910 45L960 60L1060 58L1160 62L1240 110L1320 160L1410 215M1390 130L1410 150"/></g>
          <g class="border">
            <path d="M825 30L800 100L765 150L770 190L785 205L750 255L745 320L695 378L520 395L455 425L390 470L308 525L250 487L200 495L150 530L110 518L30 520L10 500M30 520L30 560L10 570M695 378L740 425L790 450L870 510L910 515L945 560L950 578L1020 592L1065 650L1110 680L1160 700L1190 740L1260 730L1320 755L1358 800L1410 820M945 578L900 665L910 685L800 780L720 855L760 930L770 975L735 1010L735 1055L690 1085L570 1220L460 1245M570 1220L560 1250L630 1255L645 1275L710 1320L755 1275L790 1275L830 1290L820 1320L840 1350L840 1420L875 1435L885 1465L855 1515M595 1255L590 1280L615 1310L618 1400L627 1430L625 1515M1358 800L1330 830L1330 860L1265 910L1245 980L1190 1080L1210 1130L1240 1140L1290 1133L1335 1160L1345 1185L1400 1210L1410 1240M10 975L50 1000L60 1040L105 1100L125 1155L185 1158L270 1210M10 1180L60 1160L10 1120M10 1300L30 1325L55 1340M15 1395L55 1405M460 1495L510 1518"/>
          </g>
        </g>

        <!-- south-east sheet -->
        <g transform="translate(457 573) scale(.33333 .40820)">
          <g class="forest">
            <path d="M45 0H270L245 30L190 55L105 60L60 25zM0 490L50 500L20 560H0zM0 540L110 555L125 570L190 620L170 640L150 665L185 690L200 710L240 690L290 655L350 690L405 710L440 760L400 790L440 830L425 870L530 865L585 900L590 940L610 950L620 975L660 965L670 1040L750 1090L700 1130L640 1130L580 1190L540 1200L510 1215L480 1180L420 1130L400 1090L350 1030L300 990L260 960L320 1010L350 1060L400 1110L430 1190L445 1240L410 1280L360 1300L320 1250L280 1160L240 1060L220 1050L215 1110L180 1110L110 1060L100 900L60 970L20 960L40 1030L0 1000zM0 1050L70 1090L120 1110L140 1160L200 1180L210 1250L170 1270L110 1250L60 1230L0 1200zM0 1250L70 1270L150 1300L120 1330L80 1310L60 1350L0 1330zM345 1380L420 1375L480 1340L540 1350L580 1320L600 1290L690 1330L650 1350L710 1370L670 1390L690 1420L640 1410L600 1440L560 1400L500 1420L440 1430L370 1480L330 1515L110 1515L140 1480L200 1470L280 1490L380 1440L400 1400zM860 480L950 485L960 530L900 560L840 530L870 510z"/>
          </g>
          <g class="land"><path d="M145 665L200 680L250 670L280 600L300 640L250 690L200 710z"/></g>
          <g class="patch"><path d="M0 185L80 160L180 190L330 230L500 215L690 230L740 290L700 325L690 420L650 400L640 370L560 340L520 370L350 400L300 450L260 520L280 600L230 650L150 560L190 510L60 530L0 480L60 440L0 380zM300 0L370 10L420 50L380 80L300 50zM900 995L960 975L965 1000L930 1010zM1350 570L1385 580L1350 655L1310 640zM1310 1130L1370 1140L1320 1190zM1130 850L1180 850L1150 890zM930 715L965 720L965 745L935 745zM1255 1300L1300 1370L1410 1345L1400 1440L1330 1470L1300 1400L1230 1340zM920 1350L970 1360L940 1400zM790 1430L850 1420L830 1460L880 1470L840 1515L780 1500zM770 1115L820 1140L790 1130z"/></g>
          <path d="M690 327L840 290L870 310L940 330L940 400L860 420L820 450L745 485L700 460L688 420zM1240 365L1290 335L1360 350L1335 370L1260 380z" fill="#edf2ee"/>
          <g class="water thin"><path d="M520 5L510 30L580 50L590 75L620 80L660 110L660 130L730 130L760 160L810 155L860 170M260 50L265 80L330 85L400 110L500 190M695 220L730 245L780 250L800 275L850 270L860 290M640 220L620 250L600 285L560 290L550 340L500 370L460 410L400 370M1285 20L1270 50L1240 160L1200 230M960 150L960 180L990 230"/></g>
          <g class="water"><path d="M990 0L990 60L998 130L990 150M1415 400L1370 330L1330 305L1280 300L1210 270L1180 240L1120 230L1060 215L990 240L970 290L945 340L945 410L900 450L840 480L840 510L860 540L920 548L925 570L905 600L915 620M850 730L780 780L765 830L775 870L765 882L710 865L698 870L720 930L770 980L855 1020L860 1080L885 1120L850 1130L860 1190L835 1220L850 1260M840 1300L865 1320L820 1315L815 1330L870 1365L875 1430L830 1460L838 1515M760 1515L790 1505L830 1515"/><path class="solid-water" d="M670 810L712 815L705 832H690zM1172 8H1198V24H1172z"/></g>
          <g class="road"><path d="M0 365L70 320L85 290L140 255L140 230L170 200L350 225L390 260M90 160L130 180L145 210L140 240M170 200L155 220M520 290L480 330L400 370L390 380L300 430L255 480L215 540M160 560L230 570L275 600L330 575L420 575L500 560L550 510L620 470L680 455L730 430L830 420L900 400M550 365L610 380L650 385L680 320L750 285M555 365L560 410L650 460L680 463M650 370L645 340M655 520L700 535L780 535L820 515L850 450L920 400L940 350L930 320M800 650L830 665L835 695L770 740L770 770L690 800L630 820L640 940L665 970L655 1020L720 1050L785 1090L780 1115L745 1120L690 1180L640 1185L595 1230L540 1190L520 1210L490 1180L445 1160L410 1080L350 1030M135 1105L180 1120L240 1120L300 1150L315 1180L315 1255L370 1290L400 1300M135 1105L180 1180L220 1190L240 1260L245 1300L215 1310L210 1370L235 1390L180 1380L150 1360L140 1420L110 1440L85 1515M450 1170L435 1200L435 1250L450 1290L445 1320L470 1340L468 1380L440 1400L410 1395L410 1420L460 1450L390 1470L330 1490L315 1515M0 1420L20 1430L10 1450L50 1450M205 710L250 690L280 640L275 600M800 650L850 660L880 650L885 600L840 550L820 520L825 490L850 450M890 720L940 690L990 650L1045 645M1050 550L1045 730L1025 820L1025 920L1030 1000L1050 1100L1025 1150L1035 1250L1070 1280L1070 1370L1090 1410L1150 1450L1145 1515M1045 740L1020 740L960 810L1025 850L1090 840M1050 870L1100 820L1130 830M965 990L1020 960L1025 930M1095 100L1035 130L1020 170L1025 230L1150 240L1200 260M1060 300L1040 390L1090 400M1060 300L1095 280L1130 310L1180 280M785 95L880 105L985 110L980 50L910 35L800 0M700 30L730 15L850 30M1090 90L1090 70L1150 80M560 60L610 60L650 110L630 180M1205 40L1285 50M1290 50L1410 55M1365 130L1370 230M1280 530L1260 590L1230 630L1180 650L1160 690L1070 680M1210 450L1260 490L1415 590M1330 850L1365 900L1370 1010L1390 1060L1380 1130L1310 1200L1250 1235M1255 860L1310 865M1245 900L1285 910L1280 940L1250 1010L1245 1040L1220 1070M1130 1340L1180 1380M1320 1420L1370 1420L1380 1370L1410 1350M1070 200L1000 160L985 190L1020 240"/></g>
          <g class="yellow"><path class="wide" d="M930 325L985 335L990 470L1075 572L1160 595L1285 690L1325 690L1415 590M690 175L690 225L740 280L820 290L850 310"/><path d="M0 282L300 300L400 312L430 297L500 295L530 275L610 235L690 212L790 185L850 185L870 170L960 142L1020 155L1080 180L1165 210L1215 255L1195 280L1235 335L1230 360L1205 400L1195 450L1155 490L1080 572M945 145L935 200L950 260L930 325M1155 490L1240 510L1280 530L1285 560L1310 580L1310 640L1322 690M1168 0L1155 120L1165 210M1200 0L1203 130M1155 122L1275 142M1270 0L1295 20L1295 60L1265 200L1215 250M1265 200L1320 220L1415 268M1285 690L1275 780L1250 830L1240 900L1225 940L1215 1050L1230 1070L1240 1180L1245 1270L1270 1350L1325 1390L1300 1440L1310 1515M1340 700L1335 850M1325 690L1415 780M1145 800L1170 830L1115 830L1120 890L1145 920L1130 940L1080 955L1085 990L1105 985L1070 995L1085 1020L1065 1030L1070 1050L1110 1050"/></g>
          <path d="M900 1135L880 1170L855 1240L880 1300L885 1420L830 1465L740 1512L665 1516" fill="none" stroke="#fec376" stroke-width="4"/>
          <path d="M0 190L50 220M10 215L40 250M0 280H20" class="yellowline"/>
          <g class="border">
            <path d="M320 55L410 65L470 85L520 130L555 190M490 150L525 140M490 150L495 210L520 240L600 240L635 220L625 260L635 365L690 345L770 335L940 410M670 120L625 200M600 250L615 290L560 310L545 360L470 390L340 410L300 450L320 485L300 530L275 570L275 650L225 720L220 770L230 865L300 850L330 780L390 750L430 750L490 712L560 760L585 770L620 820L700 868M0 810L80 830L140 860L230 865M945 410L900 450L840 490L850 540L920 550L905 610L915 655L870 670L860 720L850 735L920 790L970 865L945 900L1010 945L1015 1010L1040 1045L970 1055L855 1030M920 615L950 590L990 600L1020 632L1070 630L1070 670L1120 700L1145 760L1140 800L1165 830L1120 850L1120 890L1145 920L1080 960L1090 1000L1060 1040L1110 1060L1110 1090L1135 1130L1105 1150L1105 1190L1115 1240L1130 1255L1110 1290L1130 1340L1190 1380L1230 1385L1240 1430L1210 1470L1215 1515M1130 910L1165 875L1305 883L1310 830L1340 805L1415 795M1305 883L1320 910L1310 930L1335 960L1320 1010L1350 1050L1345 1100L1320 1120L1240 1130L1140 1135M1320 1120L1310 1160L1335 1190L1380 1200L1415 1230M1190 1380L1250 1355L1350 1340L1380 1300L1415 1290M1415 1350L1380 1390L1385 1425L1415 1430M1130 1255L1080 1250L1045 1268L990 1270L950 1320L960 1340L985 1335L1005 1300L990 1270M960 1340L945 1410L900 1410L880 1420M900 1360L950 1370L970 1390M950 1415L1010 1420L1060 1470L1095 1490L1100 1515M855 1030L860 1080L885 1120L855 1135L860 1190L840 1230M870 1365L875 1430L835 1465M0 1200L20 1215L50 1370L45 1480L100 1515M700 865L765 880L775 860M720 930L770 980L855 1020M945 340L990 240M1060 215L1210 260L1330 305L1415 400"/>
          </g>
          <path class="alt" d="M690 0L700 20"/>
        </g>

        <g class="places">
          <g class="mid"><text x="333" y="17.500">Jagari</text><text x="210" y="103">चौठे</text><text x="482" y="136">Chatredeurali</text><text x="429" y="192">Banchare Danda</text><text x="2" y="209">ri</text><text x="308" y="478">Chhatre Dyaurali</text><text x="585" y="142">Kagati Gaun</text><text x="528" y="172">ससिडोल</text><text x="671" y="196">Tinpiple</text><text x="780" y="252">धर्&zwnj;मस्&zwnj;थली</text><text class="from" x="892" y="277">टोखा सर</text><text x="632" y="298">Mudkhu</text><text x="546" y="589">कंकाली</text><text x="587" y="610">भाल्&zwnj;टार</text><text x="527" y="747">Boshigaun</text><text x="602" y="889">बोसन</text><text x="868" y="1027">Satitar</text><text x="872" y="1100">Thecho</text><text x="484" y="1178">Humane</text><text class="from" x="852" y="1185">Pyangaun Baz</text><text x="32" y="698">Majhuwa</text><text x="159" y="881">Chitlang</text><text x="274" y="1051">Phakhel</text></g>
          <g class="small"><text x="406" y="134">Kālimāte</text><text x="89" y="296">Jiwanpur</text><text x="616" y="9">मकै फार्&zwnj;म</text><text x="617" y="41">Okharpauwa</text><text class="from" x="909" y="116">Phul</text><text class="wide-text from" x="912" y="237">टोख</text><text class="wide-text from" x="897" y="248">चण्&zwnj;डेश</text><text x="896" y="360">श्&zwnj;री बनियक टोल</text><text class="wide-text" x="764" y="513">चमती</text><text class="wide-text" x="833" y="529">ठमेल</text><text x="801" y="586">Damai Tol</text><text class="wide-text" x="671" y="752">कीर्&zwnj;तिपुर</text><text x="528" y="797">मच्&zwnj;छेगाउँ</text><text x="664" y="795">लखु</text><text x="613" y="807">Naugām</text><text x="472" y="813">Masala Fed</text><text x="472" y="825">(Seti Devi)</text><text class="wide-text" x="682" y="899">टौदह</text><text x="898" y="660">बबरमहल</text><text class="from" x="899" y="770">वध क्&zwnj;षेत्र</text><text x="271" y="773">Chandragiri</text><text x="371" y="854">Deurali</text><text class="tracked" x="443" y="734">MATATIRTHA</text></g>
          <g class="city"><text x="50" y="516">Naubise</text><text x="825" y="317">Tarakeshwar</text><text class="from" x="918" y="334">To</text><text x="645" y="614">Nagarjun</text><text x="604" y="681">Naya Naikap</text><text class="semi" x="858" y="739">Lalitpur</text><text x="408" y="650">Chandragiri</text><text x="613" y="1108">Dakshinkali</text><text class="from" x="912" y="1077">Go</text><text class="capital from" x="820" y="559">Kathmandu</text></g>
          <g fill="#fff" stroke="#666" stroke-width="1.200"><circle cx="825" cy="329" r="3"/><circle cx="645" cy="627" r="3"/><circle cx="604" cy="693" r="3"/><circle cx="858" cy="752" r="3"/><circle cx="408" cy="663" r="3"/><circle cx="613" cy="1120" r="3"/><rect x="730.500" y="697" width="32" height="14" rx="2"/><rect x="730" y="1083" width="31" height="14" rx="2"/></g>
          <g class="small shield"><text x="746.500" y="704">NH39</text><text x="745.500" y="1090">NH33</text></g>
        </g>

        <g class="mainroute">
          <path transform="translate(-3 -7) scale(.33333 .38270)" d="M160 1400L185 1380L215 1380L247 1400L265 1390H330L362 1373L353 1345L385 1355L410 1350L427 1365L417 1385L430 1425L445 1410L470 1425L480 1398L500 1405L515 1387L535 1420L580 1450L572 1475L605 1495L595 1475L612 1475L625 1490L637 1485L635 1445L650 1440L680 1470L705 1475L735 1495L740 1517L775 1527L810 1530L812 1508L855 1520L885 1550L875 1512L905 1490L870 1465L835 1412L830 1415L855 1455L880 1480L905 1480L900 1500L872 1508L878 1535M835 1412L875 1445L920 1455L935 1480L928 1520L950 1553L1000 1545L1040 1568L1090 1568"/>
          <path transform="translate(-3 573) scale(.33333 .40820)" d="M1020 38L1040 52L1085 50L1150 65L1165 90L1155 112L1215 112L1228 105L1255 120L1290 110L1315 120L1345 142L1415 140"/>
          <path transform="translate(457 573) scale(.33333 .40820)" d="M-10 141L40 145L70 140L115 147L165 165L200 165L230 180L270 188L320 188L375 209L440 197L490 199L495 190L545 193L580 205L630 205L640 187L660 178L685 177L703 0"/>
          <path transform="translate(457 -7) scale(.33333 .38270)" d="M699 1568L720 1385L915 1290L1000 1270L1027 1253L1102 1383L1140 1382L1195 1400L1187 1447L1222 1455L1215 1505L1230 1500L1260 1530"/>
        </g>
        <path class="altover" transform="translate(457 -7) scale(.33333 .38270)" d="M703 1530L720 1385L915 1290L1000 1270L1027 1253L1102 1383L1140 1382L1195 1400L1187 1447L1222 1455"/>
        <ellipse cx="52" cy="532" rx="9" ry="4" fill="#222" opacity=".5"/><ellipse cx="877" cy="578" rx="9" ry="4.500" fill="#222" opacity=".5"/>
        <use href="#marker" x="36.500" y="494" width="28" height="38"/><use href="#marker" x="863" y="542.500" width="28" height="38"/>
      </svg>
      <div class="controls">
        <button><svg width="13" height="14"><use href="#expand"/></svg></button>
        <button><svg width="13" height="13"><use href="#cross"/></svg></button>
        <button><svg width="14" height="14"><use href="#layers"/></svg></button>
        <button><svg width="9" height="14"><use href="#light"/></svg></button>
      </div>
      <div class="legend">
        <b>Legend</b>
        <span><i class="dot green"></i>Start Point</span>
        <span><i class="dot crimson"></i>End Point</span>
        <span><i class="line"></i>Main Route</span>
      </div>
    </div>
  </main>
  <i class="scroll"></i>
</div>

<nav class="bottom">
  <a class="w79"><svg width="23" height="20"><use href="#home"/></svg>Dashboard</a>
  <a class="w60"><svg width="25" height="20"><use href="#users"/></svg>Users</a>
  <a class="on"><i></i><svg width="15" height="20"><use href="#pin"/></svg>Tracking</a>
  <a class="w60"><svg width="20" height="20"><use href="#chart"/></svg>Reports</a>
  <a class="w61"><svg width="18" height="20"><use href="#user"/></svg>Profile</a>
  <div class="devtools"><svg width="16" height="14" viewBox="0 0 16 14"><path d="M0 0H3.200L8 8.300L12.800 0H16L8 14z" fill="#999"/><path d="M3.200 0H6L8 3.500L10 0H12.800L8 8.300z" fill="#555"/></svg></div>
</nav>
</body>
</html>
```
FILE: styles.css
```css
* { box-sizing: border-box; }
body { margin: 0; width: 2555px; height: 1600px; overflow: hidden; display: flex; flex-direction: column; background: #f8f9fa; font-family: "Noto Sans", sans-serif; font-size: 16px; }
svg { display: block; flex: none; }
svg:not([fill]) { fill: currentColor; }
.defs { position: absolute; }
h1, h2, h3 { margin: 0; }
button { font: inherit; padding: 0; border: 0; }

.topbar { height: 28px; flex: none; display: grid; grid-template-columns: 1965px 590px; align-items: center; color: #fff; font-weight: 700; text-shadow: 0 1px 3px rgba(0,0,0,.5); background: linear-gradient(96deg, #1e1926 0, #1e1926 28%, #291d33 47.300%, #40223f 47.400%, #552143 54%, #5d2144 61.500%, transparent 61.600%), linear-gradient(49deg, #77193b 0, #77193b 73.500%, #8f1f30 74%, #962528 79%, #a22d1c 84%, #a33018 100%); position: relative; }
.spaces { display: flex; align-items: center; gap: 7px; padding-left: 11px; }
.spaces i { width: 6px; height: 6px; border-radius: 50%; background: #8d8a94; }
.spaces b { width: 26px; height: 8px; border-radius: 4px; background: #fff; }
.date { position: absolute; left: 1221px; top: 5px; line-height: 18px; font-size: 14px; display: flex; align-items: center; }
.date i { width: 6px; height: 6px; border-radius: 50%; background: #fff; margin-left: 22px; }
.status { display: grid; align-items: center; grid-template-columns: 26px 42px 22px 47px 21px 49px 13px 55px 13px 75px 49px 48px 35px 29px 32px 34px; font-size: 12.600px; white-space: nowrap; }

.browser { height: 123px; flex: none; background: #303030; color: #f4f4f4; border-bottom: 1px solid #0a0a0a; font-size: 14.670px; }
.toolbar { height: 46px; display: grid; grid-template-columns: 454px 1608px 493px; align-items: center; }
.navbtns { display: flex; gap: 24px; padding-left: 10px; }
.url { height: 34px; background: #454545; border-radius: 6px; display: flex; align-items: center; gap: 12px; padding-left: 9px; padding-right: 12px; font-size: 15.500px; color: #a0a0a0; }
.url b { font-weight: 400; color: #fff; }
.star { margin-left: auto; }
.addr { margin-left: -3px; }
.winbtns { display: flex; align-items: center; justify-content: flex-end; padding-right: 11px; gap: 13px; }
.winbtns > svg { margin-right: 11px; }
.winbtns > svg:nth-child(1) { margin-right: 7px; }
.winbtns > svg:nth-child(3) { margin-right: 7px; }
.bookmarks { height: 31px; display: flex; align-items: center; gap: 17px; padding-left: 29px; }
.win { width: 24px; height: 24px; border-radius: 50%; background: #464646; display: grid; place-items: center; }
.bm { display: flex; align-items: center; gap: 5px; }
.tabs { height: 45px; padding-bottom: 1px; display: grid; grid-template-columns: 41px 819px 827px 1fr 31px; align-items: center; }
.tabs .ff { margin-left: 10px; }
.tab { height: 34px; border-radius: 6px; display: flex; align-items: center; gap: 11px; padding: 0 12px 0 13px; }
.tab.active { background: #454545; }
.tab:nth-child(3) { padding-left: 18px; }
.tab.ruled { border-left: 1px solid #4c4c4c; border-radius: 0; height: 30px; padding-left: 15px; }
.tab .close { margin-left: auto; }

.app { flex: 1; min-height: 0; overflow: hidden; position: relative; display: flex; flex-direction: column; }
.brand { height: 70px; flex: none; background: #700707; color: #fff; display: flex; align-items: center; justify-content: center; gap: 16px; padding: 1px 0 0 1px; box-shadow: 0 2px 10px rgba(0,0,0,.1); z-index: 2; position: relative; }
.brand h1 { font: 700 24px/1.300 "Noto Serif", "Droid Serif", "DejaVu Serif", serif; }
.hero { height: 82px; flex: none; background: linear-gradient(135deg, #700707 0, #8b0000 80%); padding: 0 580px 0 575px; box-shadow: 0 4px 20px rgba(0,0,0,.1); }
.hero-card { height: 58px; padding: 12px 32px; line-height: 22px; color: #777; background: #fff; border-radius: 0 0 12px 12px; box-shadow: 0 4px 20px rgba(0,0,0,.08); }
.layout { display: grid; grid-template-columns: 400px 928px; gap: 24px; padding: 24px 0 0 599px; align-items: start; }
.panel { background: #fff; border-radius: 12px; height: 1400px; box-shadow: 0 4px 20px rgba(0,0,0,.1); }
.panel section { padding: 24px 24px 0; }
h2 { display: flex; align-items: center; gap: 12px; color: #2c3e50; font-size: 20px; font-weight: 600; line-height: 28px; }
h2 svg { color: #700707; }
h3 { color: #2c3e50; font-size: 16px; font-weight: 600; line-height: 22px; }
.loc { display: flex; align-items: center; gap: 8px; color: #34495e; font-weight: 500; line-height: 22px; margin-top: 23px; }
.dot { width: 16px; height: 16px; border-radius: 50%; flex: none; }
.green { background: #28a745; } .crimson { background: #dc3545; } .red { color: #dc3545; }
.inputrow { display: flex; gap: 8px; margin-top: 12px; }
.input { width: 253px; height: 50px; border: 2px solid #e9ecef; border-radius: 8px; padding: 0 16px; line-height: 46px; }
.input span { display: block; overflow: hidden; white-space: nowrap; }
.btn { width: 42px; height: 50px; border-radius: 8px; display: grid; place-items: center; }
.btn.solid { background: #700707; color: #fff; }
.btn.outline { width: 41px; border: 2px solid #700707; background: #fff; color: #700707; }
.inputrow + .loc { margin-top: 24px; }
.planning h3 { margin-top: 24px; }
.prefs { display: grid; grid-template-columns: 1fr 1fr; gap: 16px; margin-top: 16px; }
.prefs label { display: block; font-size: 14px; font-weight: 500; line-height: 19px; color: #34495e; }
.select { height: 36px; margin-top: 8px; border: 1px solid #ededf0; border-radius: 5px; background: #e9e9ed; display: flex; align-items: center; justify-content: space-between; padding: 0 5px 0 8px; font-size: 14px; }
.toggle { display: flex; align-items: center; gap: 12px; font-size: 14px; height: 20px; margin-top: 12px; }
.prefs + .toggle { margin-top: 17px; }
.toggle i { width: 40px; height: 20px; border-radius: 10px; background: #ccc; padding: 2px; }
.toggle i::before { content: ""; display: block; width: 16px; height: 16px; border-radius: 50%; background: #fff; }
.calc { margin-top: 24px; width: 352px; height: 54px; border-radius: 8px; background: linear-gradient(135deg, #700707, #8b0000); color: #fff; font-weight: 600; display: flex; align-items: center; justify-content: center; gap: 12px; }
.information { margin-top: 24px; border-top: 1px solid #e9ecef; }
.stat { height: 78px; margin-top: 16px; background: #f8f9fa; border-radius: 8px; display: flex; align-items: center; gap: 16px; padding: 0 16px; }
h2 + .stat { margin-top: 27px; }
.stat > i { width: 40px; height: 40px; border-radius: 50%; background: #700707; color: #fff; display: grid; place-items: center; }
.stat > div { padding-top: 2px; }
.stat b { display: block; font-size: 20px; line-height: 26px; color: #2c3e50; }
.stat span { display: block; font-size: 14px; line-height: 20px; color: #7f8c8d; }
.information h3 { margin: 28px 0 16px; }
.step { height: 60px; display: flex; align-items: center; gap: 12px; padding-left: 12px; }
.step > i { width: 30px; height: 30px; border-radius: 50%; background: #e9ecef; color: #700707; display: grid; place-items: center; }
.step b { display: block; font-size: 14px; font-weight: 500; line-height: 19px; }
.step span { display: block; font-size: 12px; line-height: 16px; color: #444; }

.map { position: relative; height: 1400px; border-radius: 12px; overflow: hidden; background: #f8f1e3; box-shadow: 0 4px 20px rgba(0,0,0,.1); }
.canvas path { vector-effect: non-scaling-stroke; }
.forest path { fill: #dae9c5; }
.land { fill: #f8f1e3; }
.patch path { fill: #efebd8; }
.road path { fill: none; stroke: #fff; stroke-width: 1.500; filter: drop-shadow(0 0 .5px #d8d2c6); }
.yellow path, .yellowline { fill: none; stroke: #fde293; stroke-width: 2.600; }
.yellow .wide { stroke-width: 4; }
.yellow.thin path { stroke-width: 2; }
.yellow.dashed path, .yellowline { stroke-width: 1.500; stroke-dasharray: 6 5; }
.water path { fill: none; stroke: #84cdfb; stroke-width: 2.600; }
path.water { fill: none; stroke: #84cdfb; stroke-width: 2; }
.water.thin path { stroke: #b5d7ec; stroke-width: 1; }
.water .solid-water { fill: #84cdfb; stroke: none; }
.border path { fill: none; stroke: #a9a9ac; stroke-width: 1.300; stroke-dasharray: 5 2.500; }
.alt { fill: none; stroke: #6c757d; stroke-opacity: .6; stroke-width: 4; stroke-linecap: round; stroke-linejoin: round; }
.mainroute { opacity: .8; fill: none; stroke: #700707; stroke-width: 6.500; stroke-linecap: round; stroke-linejoin: round; }
.altover { fill: none; stroke: #6c757d; stroke-opacity: .65; stroke-width: 4; stroke-dasharray: 16 10; stroke-linecap: round; }
.places text { font-family: Roboto, "Noto Sans Devanagari", "Noto Sans", sans-serif; text-anchor: middle; dominant-baseline: central; paint-order: stroke; stroke: #fff; stroke-width: 2px; stroke-opacity: .85; fill: #5f6368; }
.mid text { font-size: 12.500px; } .small text { font-size: 10.200px; } .city text { font-size: 16px; fill: #222; }
.places .from { text-anchor: start; }
.places .semi { font-weight: 500; } .places .capital { font-size: 21.500px; font-weight: 500; }
.wide-text { letter-spacing: 2.400px; }
.tracked { letter-spacing: 1.600px; }
.places .shield text { stroke: none; font-weight: 500; }

.controls { position: absolute; top: 16px; right: 16px; display: grid; gap: 8px; }
.controls button { width: 40px; height: 40px; border-radius: 6px; background: #fff; color: #2c3e50; display: grid; place-items: center; box-shadow: 0 2px 8px rgba(0,0,0,.15); }
.legend { position: absolute; left: 16px; top: 1067px; width: 135px; height: 160px; padding: 16px; background: #fff; border-radius: 8px; box-shadow: 0 2px 10px rgba(0,0,0,.15); font-size: 14px; color: #6c757d; white-space: nowrap; }
.legend b { display: block; font-size: 16px; font-weight: 600; color: #2c3e50; line-height: 22px; margin-bottom: 8px; }
.legend span { display: flex; align-items: center; gap: 8px; height: 27px; }
.legend .line { width: 20px; height: 3px; background: #700707; }
.scroll { position: absolute; right: 0; top: 89px; width: 4px; height: 1280px; background: #7c7c7c; border-radius: 2px; }

.bottom { height: 81px; flex: none; background: #fff; border-top: 1px solid #e0e0e0; box-shadow: 0 -2px 10px rgba(0,0,0,.1); display: flex; justify-content: space-around; padding: 8px 14px 0 11px; position: relative; z-index: 3; }
.bottom a { height: 64px; padding-top: 12px; display: flex; flex-direction: column; align-items: center; gap: 8px; color: #666; font: 12px/16px "Noto Serif", "Droid Serif", "DejaVu Serif", serif; border-radius: 12px; position: relative; }
.w79 { width: 79px; } .w60 { width: 60px; } .w61 { width: 61px; }
.bottom .on { width: 67px; background: #f1e6e6; color: #700707; }
.on i { position: absolute; top: 0; left: 32px; width: 4px; height: 4px; border-radius: 50%; background: #700707; }
.devtools { position: absolute; left: 1259px; bottom: -8px; width: 32px; height: 32px; border-radius: 16px; background: #151515; display: grid; place-items: center; }
```
